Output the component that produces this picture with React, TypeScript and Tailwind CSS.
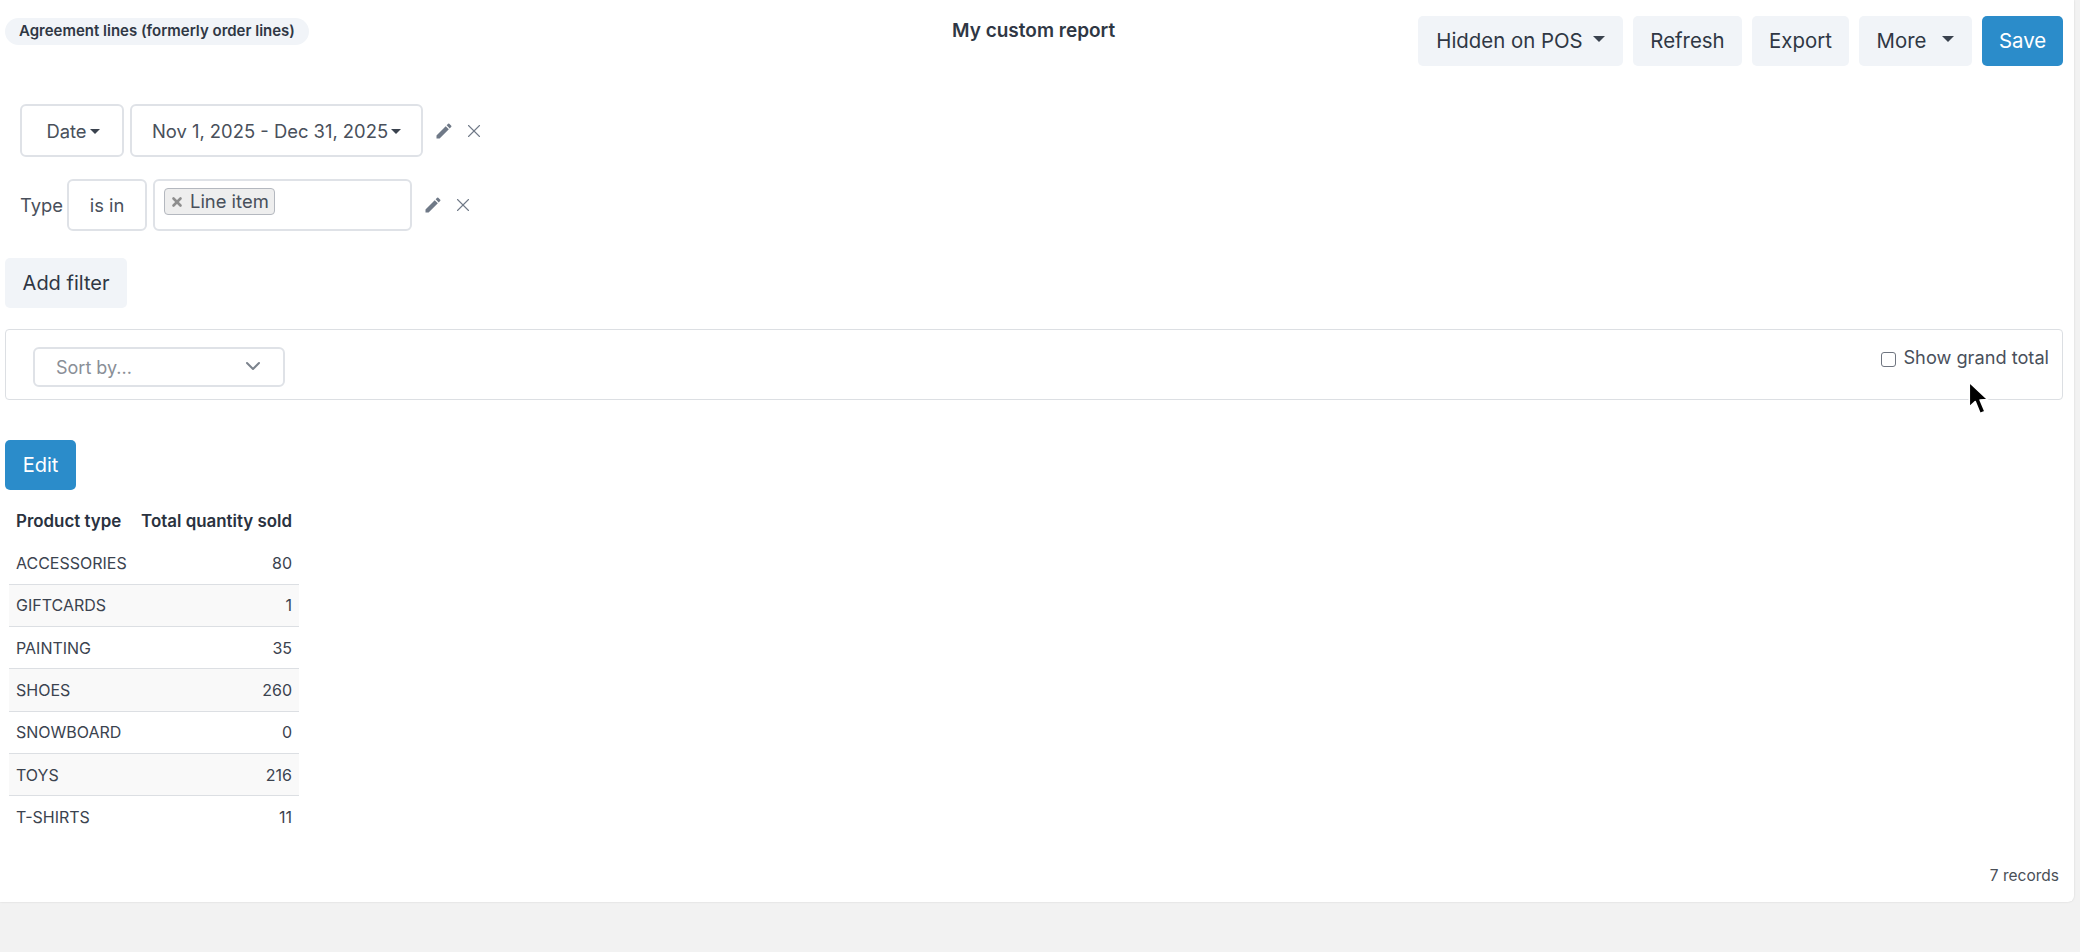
import { X, ChevronDown } from "lucide-react";
import { MdEdit } from "react-icons/md";

const rows = [
  ["ACCESSORIES", "80"],
  ["GIFTCARDS", "1"],
  ["PAINTING", "35"],
  ["SHOES", "260"],
  ["SNOWBOARD", "0"],
  ["TOYS", "216"],
  ["T-SHIRTS", "11"],
];

function Caret({ className = "" }: { className?: string }) {
  return <span className={`inline-block w-0 h-0 border-x-transparent border-t-[#3a424e] ${className}`} />;
}

function TopButton({ label, width, caretClass }: { label: string; width: string; caretClass?: string }) {
  return (
    <button className={`h-[50px] rounded-[5px] bg-[#f1f4f8] text-[#2f3744] text-[20.4px] flex items-center justify-center ${width}`}>
      {label}
      {caretClass && <Caret className={`-mt-[4px] border-x-[6px] border-t-[6px] ${caretClass}`} />}
    </button>
  );
}

function FilterActions() {
  return (
    <div className="flex items-center gap-[9px] ml-[11px] text-[#6f7987]">
      <MdEdit size={20} />
      <X size={22} strokeWidth={1.2} />
    </div>
  );
}

export default function App() {
  return (
    <div className="min-h-[952px] bg-[#f2f2f2] font-['Inter',sans-serif]">
      <div className="relative w-[2074px] h-[902px] bg-white rounded-br-[6px] shadow-[0_0_2px_rgba(0,0,0,0.15)] px-[5px]">
        {/* Header */}
        <div className="flex items-start">
          <div className="w-[1000px] pt-[18px]">
            <span className="inline-flex items-center h-[27px] px-[14px] rounded-full bg-[#f1f4f8] text-[#2f3744] text-[15px] font-semibold">
              Agreement lines (formerly order lines)
            </span>
          </div>
          <div className="flex-1 pt-[17px] text-[19px] font-semibold text-[#2f3744]">
            <span className="ml-[-53px]">My custom report</span>
          </div>
          <div className="flex gap-[10px] pt-[16px] pr-[6px]">
            <TopButton label="Hidden on POS" width="w-[205px]" caretClass="ml-[10px]" />
            <TopButton label="Refresh" width="w-[109px]" />
            <TopButton label="Export" width="w-[97px]" />
            <TopButton label="More" width="w-[113px]" caretClass="ml-[16px]" />
            <button className="h-[50px] w-[81px] rounded-[5px] bg-[#2b8cca] text-white text-[20.4px]">Save</button>
          </div>
        </div>

        {/* Filters */}
        <div className="flex items-center mt-[38px] ml-[15px] text-[18.4px] text-[#49505b]">
          <div className="w-[104px] h-[53px] pt-[2px] pl-[2px] border-2 border-[#dfe2e7] rounded-[6px] flex items-center justify-center">
            Date
            <Caret className="ml-[3px] border-x-[5px] border-t-[5px]" />
          </div>
          <div className="w-[293px] h-[53px] pt-[2px] ml-[6px] border-2 border-[#dfe2e7] rounded-[6px] flex items-center justify-center">
            Nov 1, 2025 - Dec 31, 2025
            <Caret className="ml-[3px] border-x-[5px] border-t-[5px]" />
          </div>
          <FilterActions />
        </div>
        <div className="flex items-center mt-[22px] ml-[15px] text-[18.4px] text-[#49505b]">
          <span className="w-[47px] pt-[2px]">Type</span>
          <div className="w-[80px] h-[52px] pt-[2px] border-2 border-[#dfe2e7] rounded-[6px] flex items-center justify-center">is in</div>
          <div className="w-[259px] h-[52px] ml-[6px] border-2 border-[#dfe2e7] rounded-[6px] pl-[9px] pt-[7px]">
            <span className="inline-flex items-center h-[27px] w-[111px] border border-[#b4b8bf] rounded-[4px] bg-[#eeeeee] pl-[5px]">
              <X size={14} strokeWidth={4.5} className="text-[#8e8e8e]" />
              <span className="ml-[6px]">Line item</span>
            </span>
          </div>
          <FilterActions />
        </div>
        <button className="block mt-[27px] w-[122px] h-[50px] rounded-[5px] bg-[#f1f4f8] text-[#2f3744] text-[20px]">Add filter</button>

        {/* Sort bar */}
        <div className="flex justify-between mt-[21px] w-[2058px] h-[71px] border border-[#dcdfe3] rounded-[4px] pl-[27px] pr-[13px]">
          <div className="mt-[17px] w-[252px] h-[40px] border-2 border-[#dfe2e7] rounded-[6px] flex items-center justify-between pl-[21px] pr-[18px] text-[18px] text-[#8a8f97]">
            Sort by...
            <ChevronDown size={24} strokeWidth={2} className="text-[#7c838d] -mt-[3px]" />
          </div>
          <label className="flex items-center gap-[7px] h-[56px] text-[18.2px] text-[#49505b]">
            <span className="w-[15px] h-[15px] mt-[2px] border border-[#6f7580] rounded-[3px] bg-white" />
            Show grand total
          </label>
        </div>

        <button className="block mt-[40px] w-[71px] h-[50px] rounded-[5px] bg-[#2b8cca] text-white text-[20px]">Edit</button>

        {/* Results */}
        <table className="mt-[9px] ml-[4px] w-[290px] border-collapse text-[16px] text-[#3b434f]">
          <thead>
            <tr className="h-[43px] text-[#2a3240] whitespace-nowrap">
              <th className="text-left font-semibold text-[16.9px] pl-[7px] pt-[3px]">Product type</th>
              <th className="text-right font-semibold text-[16.9px] pr-[7px] pt-[3px]">Total quantity sold</th>
            </tr>
          </thead>
          <tbody>
            {rows.map(([name, qty], i) => (
              <tr key={name} className={`h-[42.3px] ${i < rows.length - 1 ? "border-b border-[#dcdfe3]" : ""} ${i % 2 === 1 ? "bg-[#f9f9f9]" : ""}`}>
                <td className="pl-[7px]">{name}</td>
                <td className="pr-[7px] text-right">{qty}</td>
              </tr>
            ))}
          </tbody>
        </table>

        <div className="absolute right-[15px] bottom-[15px] text-[15.5px] text-[#4a4f57]">7 records</div>

        {/* Mouse cursor */}
        <svg className="absolute left-[1966px] top-[380px]" width="26" height="39" viewBox="0 0 24 36">
          <path d="M3 2 L3 25 L8.5 20 L13 31 L17.5 29 L13 18.5 L20 18 Z" fill="#000" stroke="#fff" strokeWidth="1.5" strokeLinejoin="round" />
        </svg>
      </div>
    </div>
  );
}
